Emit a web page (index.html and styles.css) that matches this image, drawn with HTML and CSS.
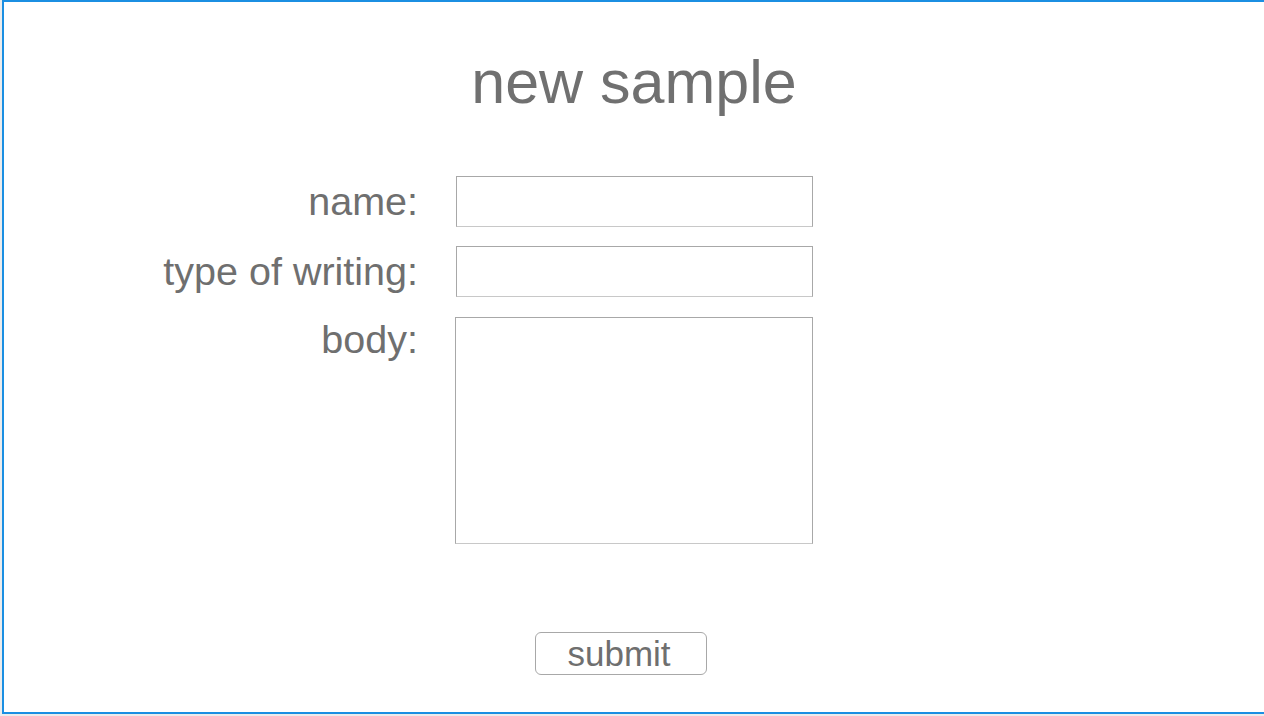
FILE: index.html
```html
<!DOCTYPE html>
<html>
<head>
<meta charset="utf-8">
<link rel="stylesheet" href="styles.css">
</head>
<body>
<div class="frame">
  <h1 class="title">new sample</h1>
  <form class="form">
    <label class="label" for="name">name:</label>
    <input class="field" id="name" type="text">
    <label class="label" for="type">type of writing:</label>
    <input class="field" id="type" type="text">
    <label class="label label-top" for="body">body:</label>
    <textarea class="area" id="body"></textarea>
  </form>
  <div class="actions">
    <button class="submit" type="button">submit</button>
  </div>
</div>
</body>
</html>
```

FILE: styles.css
```css
html, body {
  margin: 0;
  padding: 0;
  background: #ececec;
  overflow: hidden;
}
body {
  font-family: "Liberation Sans", Arial, sans-serif;
  color: #6f6f6f;
}
.frame {
  margin-left: 2px;
  height: 710px;
  border: 2px solid #1b8fe2;
  border-right: none;
  background: #fff;
}
.title {
  margin: 50px 0 0;
  font-size: 61px;
  line-height: 60px;
  font-weight: normal;
  text-align: center;
  color: #707070;
}
.form {
  margin-top: 64px;
  display: grid;
  grid-template-columns: 414px 357px;
  column-gap: 38px;
  row-gap: 19px;
}
.label {
  text-align: right;
  font-size: 39.5px;
  line-height: 51px;
  color: #6f6f6f;
  white-space: nowrap;
}
.label-top {
  line-height: 46px;
}
.field {
  box-sizing: border-box;
  height: 51px;
  width: 357px;
  margin: 0;
  border: 1px solid #a8a8a8;
  border-bottom-color: #c8c8c8;
  background: #fff;
  padding: 0 6px;
}
.area {
  box-sizing: border-box;
  height: 227px;
  width: 358px;
  margin: 1px 0 0 -1px;
  border: 1px solid #a8a8a8;
  border-bottom-color: #c8c8c8;
  background: #fff;
  resize: none;
}
.actions {
  margin-top: 88px;
  padding-left: 531px;
}
.submit {
  box-sizing: border-box;
  width: 172px;
  height: 43px;
  border: 1px solid #a8a8a8;
  border-radius: 6px;
  background: #fff;
  font-family: "Liberation Sans", Arial, sans-serif;
  font-size: 35px;
  line-height: 41px;
  color: #6f6f6f;
  padding: 0 4px 0 0;
}
```
